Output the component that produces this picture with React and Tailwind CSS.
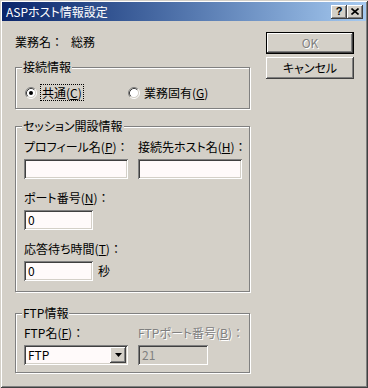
import React from 'react';

// Win2000 style 3D edges
const sunken = 'shadow-[inset_1px_1px_0_#808080,inset_-1px_-1px_0_#fff,inset_2px_2px_0_#404040,inset_-2px_-2px_0_#d4d0c8]';
const raised = 'shadow-[inset_-1px_-1px_0_#404040,inset_1px_1px_0_#fff,inset_-2px_-2px_0_#808080,inset_2px_2px_0_#d4d0c8]';

function Key({ k }) {
  return <span className="underline underline-offset-[1px]">{k}</span>;
}

// full-width colon without proportional spacing, like the original font
function Colon() {
  return <span className="[font-feature-settings:normal]">：</span>;
}

function Group({ title, className, children }) {
  return (
    <div className={`relative border border-[#808080] shadow-[inset_1px_1px_0_#fff,1px_1px_0_#fff] ${className}`}>
      <span className="absolute -top-[8px] left-[6px] bg-[#d4d0c8] px-[1px] leading-[14px]">{title}</span>
      {children}
    </div>
  );
}

function Radio({ checked }) {
  return (
    <svg width="12" height="12" viewBox="0 0 12 12" className="shrink-0">
      <circle cx="6" cy="6" r="4.5" fill="#fff" />
      <path d="M2.11 9.89 A5.5 5.5 0 0 1 9.89 2.11" fill="none" stroke="#808080" />
      <path d="M9.89 2.11 A5.5 5.5 0 0 1 2.11 9.89" fill="none" stroke="#fff" />
      <path d="M2.82 9.18 A4.5 4.5 0 0 1 9.18 2.82" fill="none" stroke="#404040" />
      <path d="M9.18 2.82 A4.5 4.5 0 0 1 2.82 9.18" fill="none" stroke="#d4d0c8" />
      {checked && <circle cx="6" cy="6" r="2" fill="#000" />}
    </svg>
  );
}

function Field({ value, className = 'w-[69px]' }) {
  return (
    <div className={`h-[20px] bg-[#fffafa] pl-[4px] leading-[20px] ${sunken} ${className}`}>{value}</div>
  );
}

export default function App() {
  return (
    <div
      className="w-[368px] h-[388px] bg-[#d4d0c8] p-[2px] text-[12px] leading-[14px] text-black shadow-[inset_1px_1px_0_#d4d0c8,inset_-1px_-1px_0_#404040,inset_2px_2px_0_#fff,inset_-2px_-2px_0_#808080] [font-feature-settings:'palt'] select-none"
      style={{ fontFamily: '"Noto Sans CJK JP", "Noto Sans", sans-serif' }}
    >
      {/* Title bar */}
      <div className="h-[19px] flex items-center bg-gradient-to-r from-[#0a246a] to-[#a6caf0] pl-[4px] pr-[3px]">
        <span className="text-white text-[12px] leading-[18px]">ASPホスト情報設定</span>
        <div className="ml-auto flex">
          <div className={`w-[16px] h-[14px] bg-[#d4d0c8] flex items-center justify-center text-[11px] leading-none font-bold ${raised}`} style={{ fontFamily: '"Liberation Sans", sans-serif' }}>?</div>
          <div className={`w-[16px] h-[14px] bg-[#d4d0c8] flex items-center justify-center ${raised}`}>
            <svg width="8" height="7" viewBox="0 0 8 7">
              <path d="M0.5 0.5 L7.5 6.5 M7.5 0.5 L0.5 6.5" stroke="#000" strokeWidth="1.6" />
            </svg>
          </div>
        </div>
      </div>

      {/* Body */}
      <div className="flex pl-[13px] pt-[11px]">
        <div className="w-[235px] pt-[3px]">
          <div className="flex">
            <span className="w-[56px]">業務名<Colon /></span>
            <span>総務</span>
          </div>

          <Group title="接続情報" className="mt-[18px] h-[42px]">
            <div className="flex items-center pt-[16px] pl-[9px]">
              <div className="w-[103px] h-[17px] flex items-center">
                <Radio checked />
                <span className="ml-[3px] h-[17px] px-[1px] border border-dotted border-black leading-[15px]">共通(<Key k="C" />)</span>
              </div>
              <div className="h-[17px] flex items-center">
                <Radio />
                <span className="ml-[4px] leading-[15px]">業務固有(<Key k="G" />)</span>
              </div>
            </div>
          </Group>

          <Group title="セッション開設情報" className="mt-[17px] h-[166px]">
            <div className="pl-[8px] pt-[13px]">
              <div className="flex gap-[10px]">
                <div className="w-[104px]">
                  <div className="mb-[5px] whitespace-nowrap">プロフィール名(<Key k="P" />)<Colon /></div>
                  <Field className="w-[104px]" />
                </div>
                <div className="w-[104px]">
                  <div className="mb-[5px] whitespace-nowrap">接続先ホスト名(<Key k="H" />)<Colon /></div>
                  <Field className="w-[104px]" />
                </div>
              </div>
              <div className="mt-[12px] mb-[5px]">ポート番号(<Key k="N" />)<Colon /></div>
              <Field value="0" />
              <div className="mt-[12px] mb-[5px]">応答待ち時間(<Key k="T" />)<Colon /></div>
              <div className="flex items-center">
                <Field value="0" />
                <span className="ml-[5px]">秒</span>
              </div>
            </div>
          </Group>

          <Group title="FTP情報" className="mt-[21px] h-[60px]">
            <div className="pl-[8px] pt-[12px] flex gap-[10px]">
              <div className="w-[104px]">
                <div className="mb-[5px]">FTP名(<Key k="F" />)<Colon /></div>
                <div className={`w-[104px] h-[20px] bg-[#fffafa] flex items-center p-[2px] ${sunken}`}>
                  <span className="pl-[2px] flex-1">FTP</span>
                  <div className={`w-[16px] h-[16px] bg-[#d4d0c8] flex items-center justify-center ${raised}`}>
                    <svg width="7" height="4" viewBox="0 0 7 4">
                      <path d="M0 0 H7 L3.5 4 Z" fill="#000" />
                    </svg>
                  </div>
                </div>
              </div>
              <div>
                <div className="mb-[5px] whitespace-nowrap text-[#808080] [text-shadow:1px_1px_0_#fff]">FTPポート番号(<Key k="B" />)<Colon /></div>
                <div className={`w-[70px] h-[20px] bg-[#d4d0c8] pl-[4px] leading-[20px] text-[#808080] ${sunken}`}>21</div>
              </div>
            </div>
          </Group>
        </div>

        {/* Buttons */}
        <div className="ml-[16px] flex flex-col gap-[3px]">
          <div className="w-[88px] h-[22px] border border-black">
            <div className={`h-full flex items-center justify-center text-[#808080] [text-shadow:1px_1px_0_#fff] ${raised}`}>OK</div>
          </div>
          <div className={`w-[88px] h-[22px] flex items-center justify-center ${raised}`}>キャンセル</div>
        </div>
      </div>
    </div>
  );
}
